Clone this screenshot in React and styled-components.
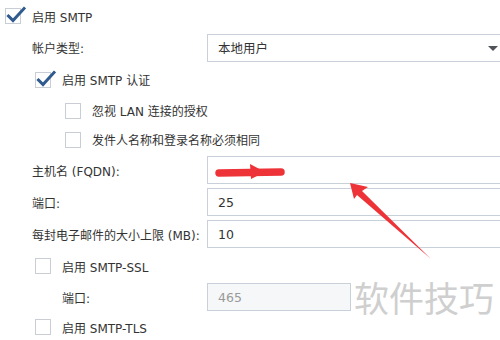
import React from 'react';
import styled, { createGlobalStyle } from 'styled-components';

const GlobalStyle = createGlobalStyle`
  html, body {
    margin: 0;
    padding: 0;
    background: #ffffff;
    overflow: hidden;
  }
  body {
    font-family: "DejaVu Sans", "Noto Sans CJK SC", sans-serif;
    font-size: 12px;
    color: #333333;
  }
`;

const Page = styled.div`
  position: relative;
  width: 500px;
  height: 340px;
  overflow: hidden;
  display: flex;
  flex-direction: column;
`;

const CheckRow = styled.label`
  display: flex;
  align-items: center;
  gap: 11px;
  height: ${({ $h }) => $h}px;
  padding-left: ${({ $level }) => 5 + $level * 30}px;
  flex-shrink: 0;
`;

const Box = styled.span`
  box-sizing: border-box;
  width: 16px;
  height: 16px;
  border: 1px solid #c9ced4;
  background: #fff;
  display: flex;
  align-items: center;
  justify-content: center;
  flex-shrink: 0;
  position: relative;

  svg {
    position: absolute;
    left: 0px;
    top: -3px;
  }
`;

const FieldRow = styled.div`
  display: flex;
  align-items: center;
  height: ${({ $h }) => $h}px;
  flex-shrink: 0;
`;

const FieldLabel = styled.span`
  box-sizing: border-box;
  width: 207px;
  flex-shrink: 0;
  padding-left: ${({ $indent }) => $indent}px;
  white-space: nowrap;
`;

const Field = styled.div`
  box-sizing: border-box;
  width: ${({ $w }) => $w}px;
  flex-shrink: 0;
  height: 28px;
  border: 1px solid #c8d0d9;
  background: ${({ $disabled }) => ($disabled ? '#f5f7f9' : '#ffffff')};
  color: ${({ $disabled }) => ($disabled ? '#9a9a9a' : '#333333')};
  display: flex;
  align-items: center;
  padding: 0 10px;
  position: relative;
  font-size: 12.5px;
`;

const Caret = styled.span`
  position: absolute;
  right: 10px;
  top: 11px;
  width: 0;
  height: 0;
  border-left: 5px solid transparent;
  border-right: 5px solid transparent;
  border-top: 5px solid #505358;
`;

const Watermark = styled.div`
  position: absolute;
  left: 354px;
  top: 276px;
  font-family: "Noto Sans CJK SC", sans-serif;
  font-size: 35px;
  color: #cfcfcf;
  line-height: 1.2;
`;

const Overlay = styled.svg`
  position: absolute;
  left: 0;
  top: 0;
  pointer-events: none;
`;

const Check = () => (
  <svg width="20" height="18" viewBox="0 0 20 18">
    <path d="M2.5 10 L7 14.5 L18 2.5" fill="none" stroke="#2f5b8e" strokeWidth="3" strokeLinecap="square" />
  </svg>
);

const Checkbox = ({ checked, level, h, children }) => (
  <CheckRow $level={level} $h={h}>
    <Box>{checked && <Check />}</Box>
    <span>{children}</span>
  </CheckRow>
);

const App = () => (
  <Page>
    <GlobalStyle />
    <Checkbox checked level={0} h={32}>启用 SMTP</Checkbox>
    <FieldRow $h={31}>
      <FieldLabel $indent={32}>帐户类型:</FieldLabel>
      <Field $w={302}>
        本地用户
        <Caret />
      </Field>
    </FieldRow>
    <Checkbox checked level={1} h={33}>启用 SMTP 认证</Checkbox>
    <Checkbox level={2} h={29}>忽视 LAN 连接的授权</Checkbox>
    <Checkbox level={2} h={29}>发件人名称和登录名称必须相同</Checkbox>
    <FieldRow $h={32}>
      <FieldLabel $indent={32}>主机名 (FQDN):</FieldLabel>
      <Field $w={302} />
    </FieldRow>
    <FieldRow $h={32}>
      <FieldLabel $indent={32}>端口:</FieldLabel>
      <Field $w={302}>25</Field>
    </FieldRow>
    <FieldRow $h={32}>
      <FieldLabel $indent={32}>每封电子邮件的大小上限 (MB):</FieldLabel>
      <Field $w={302}>10</Field>
    </FieldRow>
    <Checkbox level={1} h={32}>启用 SMTP-SSL</Checkbox>
    <FieldRow $h={30}>
      <FieldLabel $indent={62}>端口:</FieldLabel>
      <Field $w={144} $disabled>465</Field>
    </FieldRow>
    <Checkbox level={1} h={30}>启用 SMTP-TLS</Checkbox>

    <Watermark>软件技巧</Watermark>

    <Overlay width="500" height="340" viewBox="0 0 500 340">
      <path d="M219 173 L281 172" stroke="#ee3338" strokeWidth="7.5" strokeLinecap="round" fill="none" />
      <polygon points="250,164 265,172 251,179" fill="#ee3338" />
      <polygon points="350,183 368,187 362,191 431,259 357,195 354,199" fill="#ee3338" />
    </Overlay>
  </Page>
);

export default App;
